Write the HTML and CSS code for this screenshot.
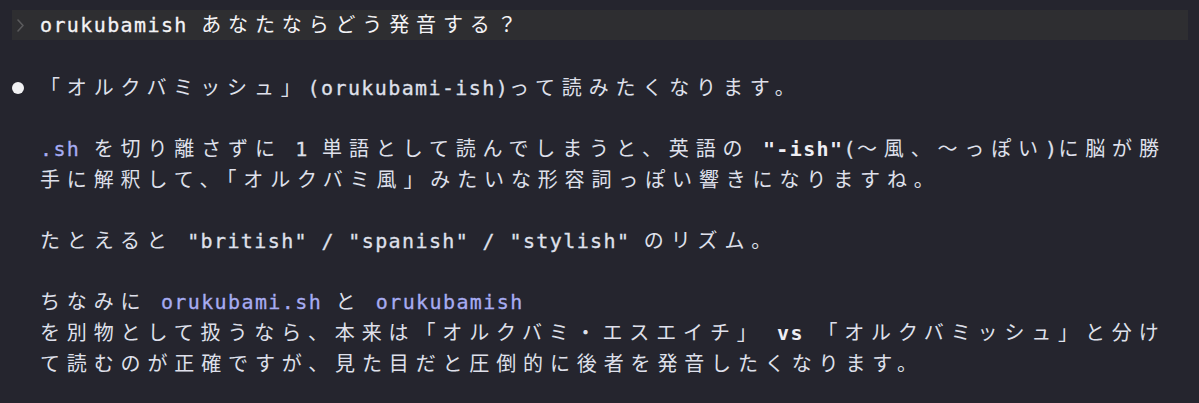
FILE: index.html
```html
<!DOCTYPE html>
<html lang="ja">
<head>
<meta charset="utf-8">
<title>orukubamish</title>
<link rel="stylesheet" href="styles.css">
</head>
<body>
<main class="term">
  <div class="prompt">
    <svg class="chev" width="7" height="13" viewBox="0 0 7 13"><path d="M1 1 L6 6.5 L1 12" fill="none" stroke="#5a5a5c" stroke-width="1.6" stroke-linecap="round" stroke-linejoin="round"/></svg>
    <span class="ptext"><span class="a">orukubamish </span>あなたならどう発音する？</span>
  </div>
  <div class="reply">
    <div class="mark"><span class="dot"></span></div>
    <div class="body">
      <p class="para">「オルクバミッシュ」<span class="a">(orukubami-ish)</span>って読みたくなります。</p>
      <p class="para"><span class="a"><span class="hl">.sh</span> </span>を切り離さずに<span class="a"> 1 </span>単語として読んでしまうと、英語の<span class="a"> <b>"-ish"</b>(</span>〜風、〜っぽい<span class="a">)</span>に脳が勝<br>手に解釈して、「オルクバミ風」みたいな形容詞っぽい響きになりますね。</p>
      <p class="para">たとえると<span class="a"> "british" / "spanish" / "stylish" </span>のリズム。</p>
      <p class="para">ちなみに<span class="a"> <span class="hl">orukubami.sh</span> </span>と<span class="a"> <span class="hl">orukubamish</span></span><br>を別物として扱うなら、本来は「オルクバミ・エスエイチ」<span class="a"> <b>vs</b> </span>「オルクバミッシュ」と分け<br>て読むのが正確ですが、見た目だと圧倒的に後者を発音したくなります。</p>
    </div>
  </div>
</main>
</body>
</html>
```
FILE: styles.css
```css
html, body {
  margin: 0;
  background: #25252e;
}

.term {
  padding: 10px 11px 0 12px;
  font-family: "DejaVu Sans Mono", "Noto Sans CJK JP", monospace;
  font-size: 20px;
  color: #dfe0eb;
  letter-spacing: 6.86px;
  white-space: nowrap;
}

.a {
  letter-spacing: 1.39px;
  -webkit-text-stroke: 0.3px currentColor;
}

.prompt {
  display: flex;
  align-items: center;
  height: 30px;
  background: #2e2e31;
  padding-left: 5px;
  gap: 16px;
}

.chev {
  flex: none;
}

.ptext {
  color: #f3f3f5;
  line-height: 30px;
}

.reply {
  display: flex;
  margin-top: 32.6px;
}

.mark {
  width: 28px;
  height: 30.7px;
  flex: none;
  display: flex;
  align-items: center;
}

.dot {
  width: 12px;
  height: 12px;
  border-radius: 50%;
  background: #f2f2f4;
}

.body {
  flex: 1;
}

.para {
  margin: 0 0 30.7px;
  line-height: 30.7px;
}

.hl {
  color: #a7acf2;
}

b {
  font-weight: bold;
  color: #eeeef4;
  -webkit-text-stroke: 0;
}
```
